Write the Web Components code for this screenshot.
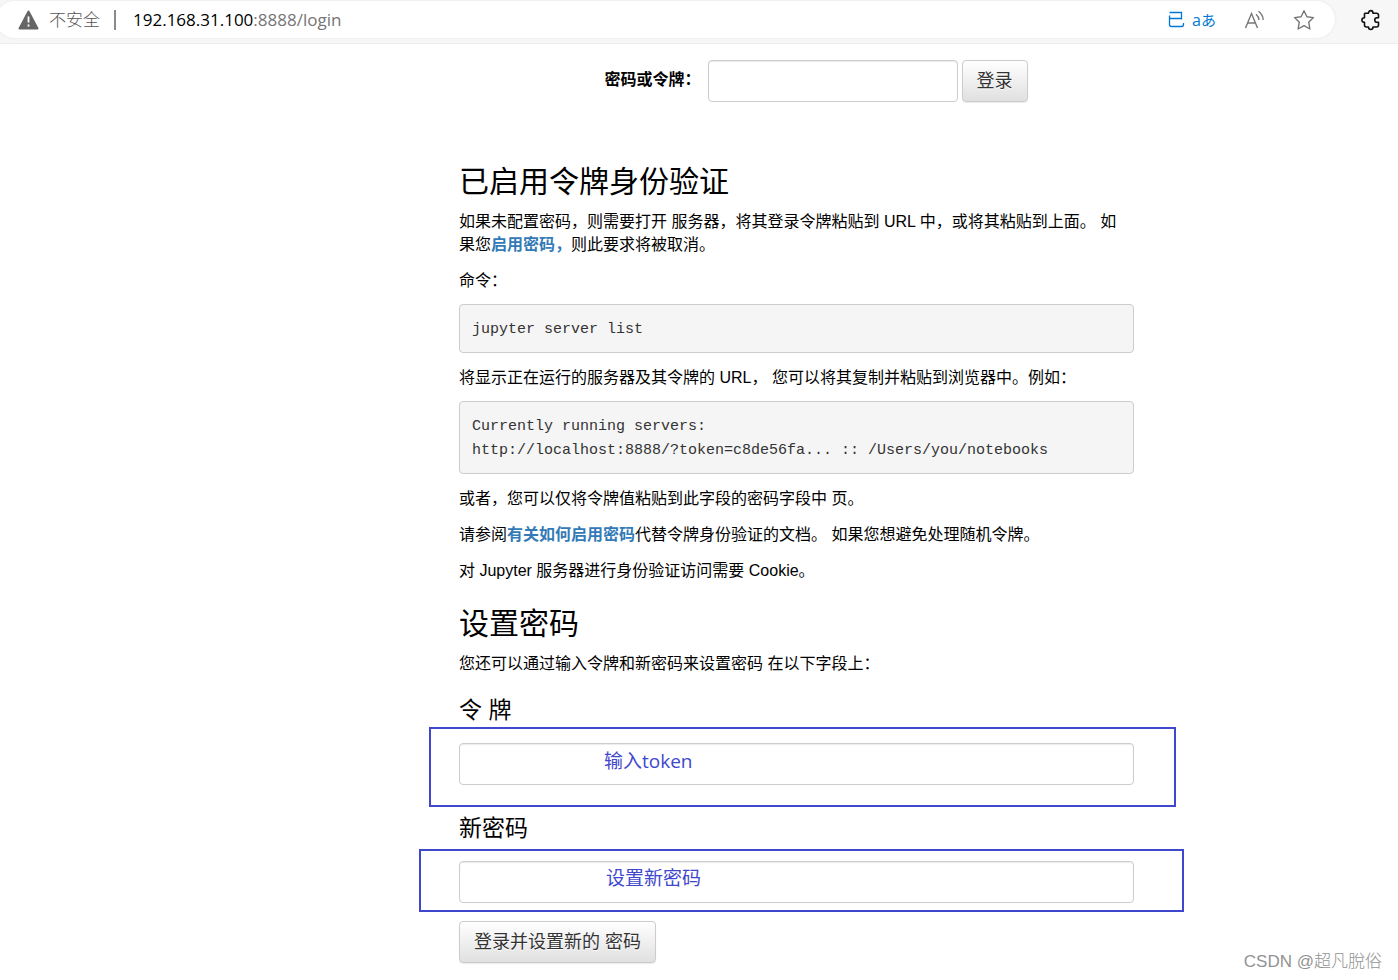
<!DOCTYPE html>
<html lang="zh-CN">
<head>
<meta charset="utf-8">
<title>登录</title>
<style>
  body {
    margin: 0;
    background: #fff;
    color: #000;
    font: 16px/23px "Liberation Sans", "Noto Sans CJK SC", sans-serif;
  }
</style>
</head>
<body>
<login-page></login-page>

<script>
const define = (name, html, setup) => {
  const template = document.createElement('template');
  template.innerHTML = html;
  customElements.define(name, class extends HTMLElement {
    constructor() {
      super();
      this.attachShadow({ mode: 'open' }).append(template.content.cloneNode(true));
    }
    connectedCallback() {
      if (setup) setup(this, this.shadowRoot);
    }
  });
};

// Browser toolbar with the address pill
define('address-bar', `
  <style>
    :host {
      display: flex; align-items: center; height: 44px; box-sizing: border-box;
      padding: 0 17px 4px 0; background: #f7f7f7; border-bottom: 1px solid #ececec;
      font-family: "Open Sans", "Noto Sans CJK SC", sans-serif;
    }
    .pill {
      flex: 1; display: flex; align-items: center; height: 37px; box-sizing: border-box;
      margin: 0 25px 0 -4px; padding: 0 20px 0 22px; border-radius: 19px; background: #fff;
      box-shadow: 0 0 3px #e4e4e4;
    }
    .state { margin-left: 10px; font-size: 17px; font-weight: 300; color: #555; }
    .rule { width: 2px; height: 20px; margin: 0 17px 0 14px; background: #8a8a8a; }
    .url { flex: 1; font-size: 17px; color: #757575; }
    .url b { font-weight: 400; color: #000; }
    button { display: flex; align-items: center; padding: 0; border: 0; background: none; font: inherit; color: #767676; }
    .translate { gap: 7px; color: #0078d4; margin-right: 28px; }
    .letters { display: flex; align-items: baseline; font-size: 16px; line-height: 20px; }
    .letters small { font-size: 15px; }
    .read { margin-right: 27px; }
    svg { display: block; fill: none; stroke: currentColor; }
    .ext { color: #111; }
  </style>
  <div class="pill">
    <svg width="21" height="20" viewBox="0 0 21 20"><path d="M10.500 1.500 19.500 18.500H1.500Z" fill="#666" stroke="#666" stroke-width="2" stroke-linejoin="round"/><path d="M10.500 6.500v6M10.500 14.500v2" stroke="#fff" stroke-width="1.800"/></svg>
    <span class="state">不安全</span><span class="rule"></span>
    <span class="url"><b>192.168.31.100</b>:8888/login</span>
    <button class="translate" type="button" aria-label="翻译">
      <svg width="17" height="17" viewBox="0 0 17 17" stroke-width="1.300"><path d="M1.500 1.500H13.500V8.500M1.500 7.500H13.500M1.500 4.500V13.500Q1.500 15.500 3.500 15.500H13.500Q15.500 15.500 15.500 13.500V12"/></svg>
      <span class="letters">a<small>あ</small></span>
    </button>
    <button class="read" type="button" aria-label="朗读">
      <svg width="22" height="20" viewBox="0 0 22 20" stroke-width="1.400"><path d="M1.500 18 7.500 3.500 13.500 18M3.600 13H11.400M12 4.200Q14.800 6.500 15 10M14.500 1.300Q19 4.700 19.200 10"/></svg>
    </button>
    <button type="button" aria-label="收藏">
      <svg width="22" height="22" viewBox="0 0 22 22" stroke-width="1.400" stroke-linejoin="round"><path d="M11 1.700 13.900 7.800 20.500 8.600 15.700 13.200 16.900 20 11 16.700 5.100 20 6.300 13.200 1.500 8.600 8.100 7.800Z"/></svg>
    </button>
  </div>
  <button class="ext" type="button" aria-label="扩展">
    <svg width="21" height="22" viewBox="0 0 21 22" stroke-width="1.600" stroke-linejoin="round"><path d="M5 4.200H8.500C8.500 .800 13 .800 13 4.200H16.500Q18.500 4.200 18.500 6.200V8.700H17C14 8.700 14 13.300 17 13.300H18.500V16Q18.500 18 16.500 18H13C13 21.300 8.500 21.300 8.500 18H6.500Q4.500 18 4.500 16V13.300C1 13.300 1 8.700 4.500 8.700V4.700Z"/></svg>
  </button>
`);

define('push-button', `
  <style>
    :host { display: inline-block; }
    button {
      height: 42px; box-sizing: border-box; padding: 0 14px; border: 1px solid #ccc; border-radius: 4px;
      background: linear-gradient(#fff, #e0e0e0); box-shadow: 0 1px 1px rgba(0,0,0,.08);
      color: #333; text-shadow: 0 1px 0 #fff;
      font: 18px/24px "Liberation Sans", "Noto Sans CJK SC", sans-serif; white-space: nowrap;
    }
  </style>
  <button type="submit"><slot></slot></button>
`);

define('code-block', `
  <style>
    :host { display: block; margin-bottom: 13px; }
    pre {
      margin: 0; padding: 13px 12px 10px; border: 1px solid #ccc; border-radius: 4px;
      background: #f5f5f5; color: #333; font: 15px/24px "Liberation Mono", monospace; white-space: pre-wrap;
    }
  </style>
  <pre><slot></slot></pre>
`);

// Titled text box; a frame with a note can lie over it
define('secret-field', `
  <style>
    :host { display: block; }
    label { display: block; font-size: 23px; line-height: 25px; margin-bottom: 20px; }
    .box { position: relative; }
    input {
      display: block; width: 100%; height: 42px; box-sizing: border-box; padding: 6px 12px;
      border: 1px solid #ccc; border-radius: 4px; background: #fff;
      box-shadow: inset 0 1px 1px rgba(0,0,0,.08); font: inherit;
    }
    .frame {
      position: absolute; inset: var(--frame-inset); box-sizing: border-box; pointer-events: none;
      border: 2px solid #3f48cc; color: #3f48cc; padding: var(--note-pad);
      font: 19px/26px "Open Sans", "Noto Sans CJK SC", sans-serif;
    }
  </style>
  <label for="f"></label>
  <div class="box"><input id="f" type="password"><div class="frame"><slot></slot></div></div>
`, (host, root) => { root.querySelector('label').textContent = host.getAttribute('label'); });

define('login-row', `
  <style>
    :host { display: block; }
    form { display: flex; align-items: center; justify-content: center; gap: 4px; padding-left: 39px; }
    label { font-weight: 700; white-space: nowrap; margin: 0 3px 4px 0; }
    input {
      width: 250px; height: 42px; box-sizing: border-box; padding: 6px 12px; border: 1px solid #ccc;
      border-radius: 4px; background: #fff; box-shadow: inset 0 1px 1px rgba(0,0,0,.08); font: inherit;
    }
  </style>
  <form>
    <label for="p">密码或令牌：</label>
    <input id="p" type="password">
    <push-button>登录</push-button>
  </form>
`);

define('login-page', `
  <style>
    :host { display: block; }
    main { display: grid; grid-template-columns: 459fr 675fr 264fr; padding: 16px 0; }
    .column { grid-column: 2; min-width: 0; }
    login-row { margin-bottom: 63px; }
    h2 { margin: 25px 0 12px; font-size: 30px; line-height: 33px; font-weight: 400; }
    p { margin: 0 0 13px; }
    p:has(+ code-block) { margin-bottom: 12px; }
    a { color: #337ab7; font-weight: 700; text-decoration: none; }
    .token { margin-top: 23px; --frame-inset: -16px -42px -22px -30px; --note-pad: 19px 0 0 173px; }
    .fresh { margin: 31px 0 18px; --frame-inset: -12px -50px -9px -40px; --note-pad: 14px 0 0 185px; }
    footer {
      position: absolute; right: 16px; top: 950px; color: #929292;
      font: 300 17px/24px "Liberation Sans", "Noto Sans CJK SC", sans-serif;
    }
  </style>
  <address-bar></address-bar>
  <main>
    <div class="column">
      <login-row></login-row>
      <h2>已启用令牌身份验证</h2>
      <p>如果未配置密码，则需要打开 服务器，将其登录令牌粘贴到 URL 中，或将其粘贴到上面。 如<br>果您<a href="#">启用密码，</a>则此要求将被取消。</p>
      <p>命令：</p>
      <code-block>jupyter server list</code-block>
      <p>将显示正在运行的服务器及其令牌的 URL， 您可以将其复制并粘贴到浏览器中。例如：</p>
      <code-block>Currently running servers:
http://localhost:8888/?token=c8de56fa... :: /Users/you/notebooks</code-block>
      <p>或者，您可以仅将令牌值粘贴到此字段的密码字段中 页。</p>
      <p>请参阅<a href="#">有关如何启用密码</a>代替令牌身份验证的文档。 如果您想避免处理随机令牌。</p>
      <p>对 Jupyter 服务器进行身份验证访问需要 Cookie。</p>
      <h2>设置密码</h2>
      <p>您还可以通过输入令牌和新密码来设置密码 在以下字段上：</p>
      <secret-field class="token" label="令 牌">输入token</secret-field>
      <secret-field class="fresh" label="新密码">设置新密码</secret-field>
      <push-button>登录并设置新的 密码</push-button>
    </div>
  </main>
  <footer>CSDN @超凡脫俗</footer>
`);
</script>
</body>
</html>
